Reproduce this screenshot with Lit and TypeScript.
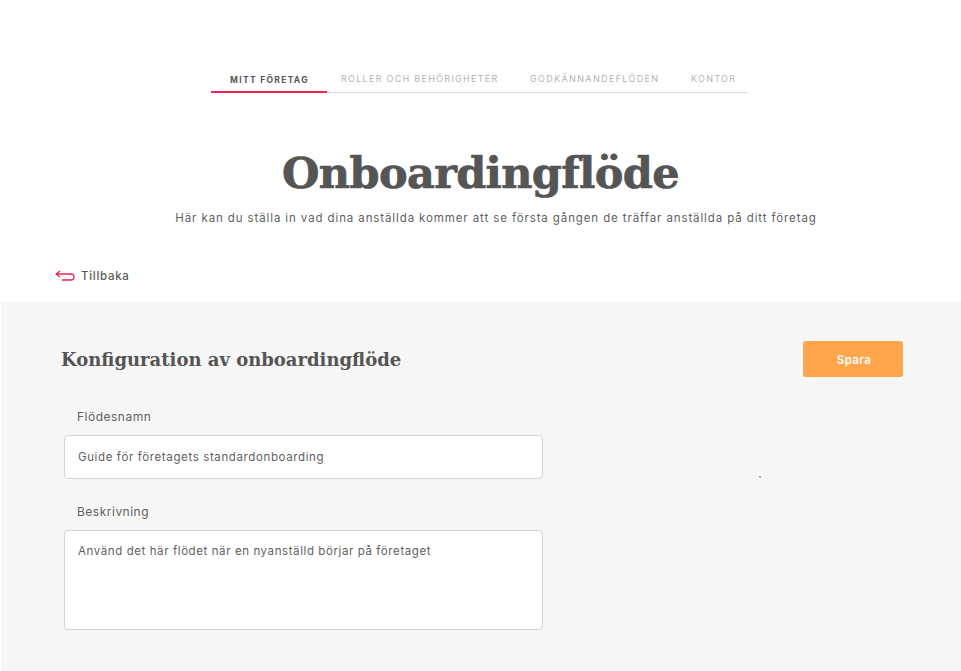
import { LitElement, html, css } from "lit";
import { customElement } from "lit/decorators.js";

@customElement("app-root")
export class AppRoot extends LitElement {
  static styles = css`
    :host { display: block; width: 961px; height: 671px; overflow: hidden; background: #fff; font-family: "Inter", sans-serif; color: #5f5f5f; }
    * { box-sizing: border-box; }
    .top { height: 301px; display: flex; flex-direction: column; align-items: center; padding-top: 66px; }
    nav { display: flex; width: 537px; height: 27px; border-bottom: 1px solid #e0e0e0; margin-right: 2px; }
    .tab { height: 27px; font-size: 9px; letter-spacing: 1.28px; line-height: 26px; color: #b4b4b4; white-space: nowrap; }
    .tab.active { width: 116px; padding-left: 19px; font-size: 8.5px; letter-spacing: 1.3px; line-height: 28px; color: #555; font-weight: 700; border-bottom: 2px solid #f4234f; }
    .t2 { margin-left: 14px; width: 189px; }
    .t3 { width: 161px; letter-spacing: 1.35px; }
    h1 { margin: 52px 0 0; font: 700 43px/56px "DejaVu Serif", serif; color: #555; letter-spacing: -0.65px; -webkit-text-stroke: 0.7px #555; }
    .sub { margin: 8px 0 0 31px; font-size: 11.5px; line-height: 18px; letter-spacing: 0.89px; color: #5f5f5f; }
    .back { align-self: flex-start; margin: 40px 0 0 55px; display: flex; align-items: center; gap: 6px; font-size: 11.5px; font-weight: 500; letter-spacing: 0.7px; color: #5a5a5a; height: 18px; }
    .panel { margin-left: 1px; height: 370px; background: #f7f7f7; padding: 40px 58px 0 60px; }
    .head { display: flex; justify-content: space-between; align-items: center; height: 36px; }
    h2 { margin: 0; padding-top: 1px; font: 700 18px/26px "DejaVu Serif", serif; color: #555; }
    button { width: 100px; height: 36px; border: 0; border-radius: 3px; background: #ffa64d; color: #fff; padding: 1px 0 0 2px; font: 600 11.5px "Inter", sans-serif; letter-spacing: 0.4px; }
    label { display: block; margin-left: 16px; font-size: 12px; line-height: 18px; letter-spacing: 0.5px; color: #5f5f5f; }
    .l1 { margin-top: 31px; }
    .l2 { margin-top: 24px; }
    .field { margin: 9px 0 0 3px; width: 479px; background: #fff; border: 1px solid #d4d4d4; border-radius: 4px; padding: 0 13px; font-size: 11.5px; letter-spacing: 0.62px; color: #5f5f5f; }
    .input { height: 44px; line-height: 42px; }
    .area { height: 100px; padding-top: 11px; line-height: 18px; letter-spacing: 0.59px; }
    .tick { position: absolute; left: 758px; top: 474px; font-size: 12px; line-height: 14px; color: #666; }
  `;

  render() {
    return html`
      <div class="top">
        <nav>
          <div class="tab active">MITT FÖRETAG</div>
          <div class="tab t2">ROLLER OCH BEHÖRIGHETER</div>
          <div class="tab t3">GODKÄNNANDEFLÖDEN</div>
          <div class="tab">KONTOR</div>
        </nav>
        <h1>Onboardingflöde</h1>
        <p class="sub">Här kan du ställa in vad dina anställda kommer att se första gången de träffar anställda på ditt företag</p>
        <div class="back">
          <svg width="20" height="12" viewBox="0 0 20 12" fill="none" stroke="#f4234f" stroke-width="1.3">
            <path d="M5 1 L1 4 L5 7 M1 4 H16 Q19 4 19 7 Q19 10 16 10 H7" />
          </svg>
          <span>Tillbaka</span>
        </div>
      </div>
      <section class="panel">
        <div class="head">
          <h2>Konfiguration av onboardingflöde</h2>
          <button>Spara</button>
        </div>
        <label class="l1">Flödesnamn</label>
        <div class="field input">Guide för företagets standardonboarding</div>
        <label class="l2">Beskrivning</label>
        <div class="field area">Använd det här flödet när en nyanställd börjar på företaget</div>
      </section>
      <div class="tick">\`</div>
    `;
  }
}
